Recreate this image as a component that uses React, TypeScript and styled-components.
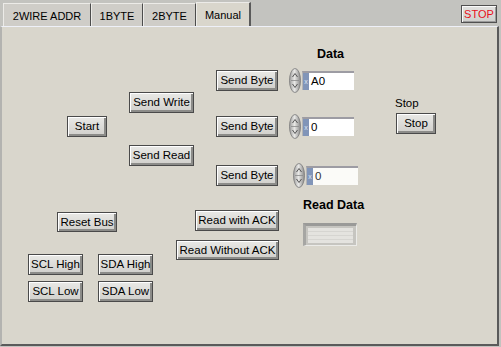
import React from "react";
import styled, { createGlobalStyle } from "styled-components";

const GlobalStyle = createGlobalStyle`
  html, body {
    margin: 0;
    padding: 0;
    background: #c3c3bf;
  }
  * {
    box-sizing: border-box;
  }
`;

const font = `"Liberation Sans", Arial, sans-serif`;

const Window = styled.div`
  width: 501px;
  height: 347px;
  background: #c3c3bf;
  font-family: ${font};
  overflow: hidden;
`;

const TabStrip = styled.div`
  height: 26px;
  display: flex;
  align-items: flex-end;
  padding-left: 3px;
`;

const Tab = styled.div<{ $w: number; $active?: boolean }>`
  width: ${(p) => p.$w}px;
  height: ${(p) => (p.$active ? 24 : 23)}px;
  display: flex;
  align-items: center;
  justify-content: center;
  font-size: 11px;
  color: #000;
  background: ${(p) => (p.$active ? "#d9d6cc" : "#cfcdc8")};
  border-top: 1px solid #ecebe8;
  border-left: 1px solid #ecebe8;
  border-right: ${(p) => (p.$active ? "2px solid #5a5a5a" : "1px solid #4c4c4c")};
  padding-top: 1px;
`;

const StopButton = styled.div`
  align-self: flex-start;
  margin: 5px 4px 0 auto;
  width: 36px;
  height: 18px;
  display: flex;
  align-items: center;
  justify-content: center;
  font-size: 11px;
  color: #e8101a;
  background: linear-gradient(#e2e2e0, #cfcfcc);
  border: 1px solid #505050;
  box-shadow: inset 1px 1px 0 #fafafa, inset -1px -1px 0 #9a9a9a;
`;

const Panel = styled.div`
  width: 499px;
  height: 320px;
  background: #d9d6cc;
  border-top: 1px solid #eef0f8;
  border-left: 2px solid #b3b3b0;
  border-right: 2px solid #5a5a5a;
  border-bottom: 2px solid #5a5a5a;
  display: flex;
  flex-direction: column;
`;

const TopBand = styled.div`
  height: 163px;
  display: flex;
  align-items: flex-start;
`;

const BottomBand = styled.div`
  flex: 1;
  display: flex;
  align-items: flex-start;
`;

const Column = styled.div<{ $left: number; $top: number; $gap?: number; $align?: string }>`
  display: flex;
  flex-direction: column;
  align-items: ${(p) => p.$align ?? "flex-start"};
  gap: ${(p) => p.$gap ?? 0}px;
  margin-left: ${(p) => p.$left}px;
  margin-top: ${(p) => p.$top}px;
`;

const Btn = styled.button<{ $w: number; $h?: number; $ml?: number }>`
  width: ${(p) => p.$w}px;
  height: ${(p) => p.$h ?? 21}px;
  margin-left: ${(p) => p.$ml ?? 0}px;
  padding: 0 0 1px;
  font-family: ${font};
  font-size: 11.5px;
  color: #000;
  background: linear-gradient(#e9e9e6, #d0cfcb);
  border: 1px solid #4a4a4a;
  border-radius: 0;
  box-shadow: inset 1px 1px 0 #ffffff, inset -2px -2px 0 #8c8c89;
  flex-shrink: 0;
`;

const Label = styled.div<{ $bold?: boolean }>`
  font-size: ${(p) => (p.$bold ? 12.5 : 11.5)}px;
  font-weight: ${(p) => (p.$bold ? 700 : 400)};
  line-height: 13px;
  height: 13px;
  color: #000;
  white-space: nowrap;
`;

const DataHeader = styled.div`
  padding-left: 91px;
  width: 138px;
  height: 14px;
  display: flex;
  justify-content: center;
`;

const ByteRow = styled.div<{ $mt: number; $shift?: number }>`
  display: flex;
  align-items: center;
  margin-top: ${(p) => p.$mt}px;
  gap: ${(p) => 11 + (p.$shift ?? 0)}px;
`;

const Numeric = styled.div`
  display: flex;
  align-items: center;
`;

const FieldWrap = styled.div`
  display: flex;
  height: 19px;
  border-top: 2px solid #9d9ca3;
  border-left: 1px solid #b4b4b4;
  margin-left: 1px;
`;

const Radix = styled.div`
  width: 6px;
  background: #8195b8;
  color: #dfe6f4;
  font-size: 7px;
  line-height: 17px;
  text-align: center;
`;

const Field = styled.div<{ $faded?: boolean }>`
  width: 45px;
  background: ${(p) => (p.$faded ? "#fbfbf8" : "#ffffff")};
  color: ${(p) => (p.$faded ? "#333" : "#000")};
  font-size: 11.5px;
  line-height: 17px;
  padding-left: 2px;
`;

const SwitchGrid = styled.div`
  display: grid;
  grid-template-columns: 55px 55px;
  column-gap: 15px;
  row-gap: 6px;
  margin-top: 22px;
`;

const Indicator = styled.div`
  width: 54px;
  height: 23px;
  margin-top: 11px;
  background: #c6c5c0;
  border-top: 3px solid #9a9a98;
  border-left: 3px solid #a6a6a3;
  border-right: 1px solid #ebebe8;
  border-bottom: 1px solid #ebebe8;
  padding: 2px 3px 2px 2px;
`;

const IndicatorFace = styled.div`
  width: 100%;
  height: 100%;
  background: repeating-linear-gradient(#e4e3df 0 3px, #d6d5d1 3px 4px);
`;

const Spinner: React.FC = () => (
  <svg width="12" height="25" viewBox="0 0 12 25">
    <defs>
      <linearGradient id="spg" x1="0" x2="1" y1="0" y2="0">
        <stop offset="0" stopColor="#9c9c9c" />
        <stop offset="0.45" stopColor="#e8e8e6" />
        <stop offset="1" stopColor="#8a8a8a" />
      </linearGradient>
    </defs>
    <ellipse cx="6" cy="12.5" rx="5.5" ry="12" fill="url(#spg)" stroke="#7a7a7a" strokeWidth="0.8" />
    <path d="M3.5 9 L6 5.5 L8.5 9" fill="none" stroke="#555" strokeWidth="1" />
    <path d="M3.5 16 L6 19.5 L8.5 16" fill="none" stroke="#555" strokeWidth="1" />
    <line x1="2" y1="12.5" x2="10" y2="12.5" stroke="#8a8a8a" strokeWidth="0.8" />
  </svg>
);

const NumericControl: React.FC<{ value: string; faded?: boolean }> = ({ value, faded }) => (
  <Numeric>
    <Spinner />
    <FieldWrap>
      <Radix>x</Radix>
      <Field $faded={faded}>{value}</Field>
    </FieldWrap>
  </Numeric>
);

const tabs = [
  { name: "2WIRE ADDR", w: 88 },
  { name: "1BYTE", w: 52 },
  { name: "2BYTE", w: 53 },
];

export default function App() {
  return (
    <Window>
      <GlobalStyle />
      <TabStrip>
        {tabs.map((t) => (
          <Tab key={t.name} $w={t.w}>
            {t.name}
          </Tab>
        ))}
        <Tab $w={55} $active>
          Manual
        </Tab>
        <StopButton>STOP</StopButton>
      </TabStrip>
      <Panel>
        <TopBand>
          <Column $left={65} $top={89}>
            <Btn $w={40}>Start</Btn>
          </Column>
          <Column $left={22} $top={65} $gap={32}>
            <Btn $w={65}>Send Write</Btn>
            <Btn $w={65}>Send Read</Btn>
          </Column>
          <Column $left={22} $top={21}>
            <DataHeader>
              <Label $bold>Data</Label>
            </DataHeader>
            <ByteRow $mt={6}>
              <Btn $w={62}>Send Byte</Btn>
              <NumericControl value="A0" />
            </ByteRow>
            <ByteRow $mt={21}>
              <Btn $w={62}>Send Byte</Btn>
              <NumericControl value="0" />
            </ByteRow>
            <ByteRow $mt={24} $shift={4}>
              <Btn $w={62}>Send Byte</Btn>
              <NumericControl value="0" faded />
            </ByteRow>
          </Column>
          <Column $left={37} $top={70} $gap={3}>
            <Label>Stop</Label>
            <Btn $w={40} $ml={1}>Stop</Btn>
          </Column>
        </TopBand>
        <BottomBand>
          <Column $left={26} $top={22}>
            <Btn $w={60} $h={20} $ml={29}>Reset Bus</Btn>
            <SwitchGrid>
              <Btn $w={55}>SCL High</Btn>
              <Btn $w={55}>SDA High</Btn>
              <Btn $w={55}>SCL Low</Btn>
              <Btn $w={55}>SDA Low</Btn>
            </SwitchGrid>
          </Column>
          <Column $left={23} $top={20} $gap={9} $align="flex-end">
            <Btn $w={84}>Read with ACK</Btn>
            <Btn $w={103} $h={20}>Read Without ACK</Btn>
          </Column>
          <Column $left={24} $top={9}>
            <Label $bold>Read Data</Label>
            <Indicator>
              <IndicatorFace />
            </Indicator>
          </Column>
        </BottomBand>
      </Panel>
    </Window>
  );
}
